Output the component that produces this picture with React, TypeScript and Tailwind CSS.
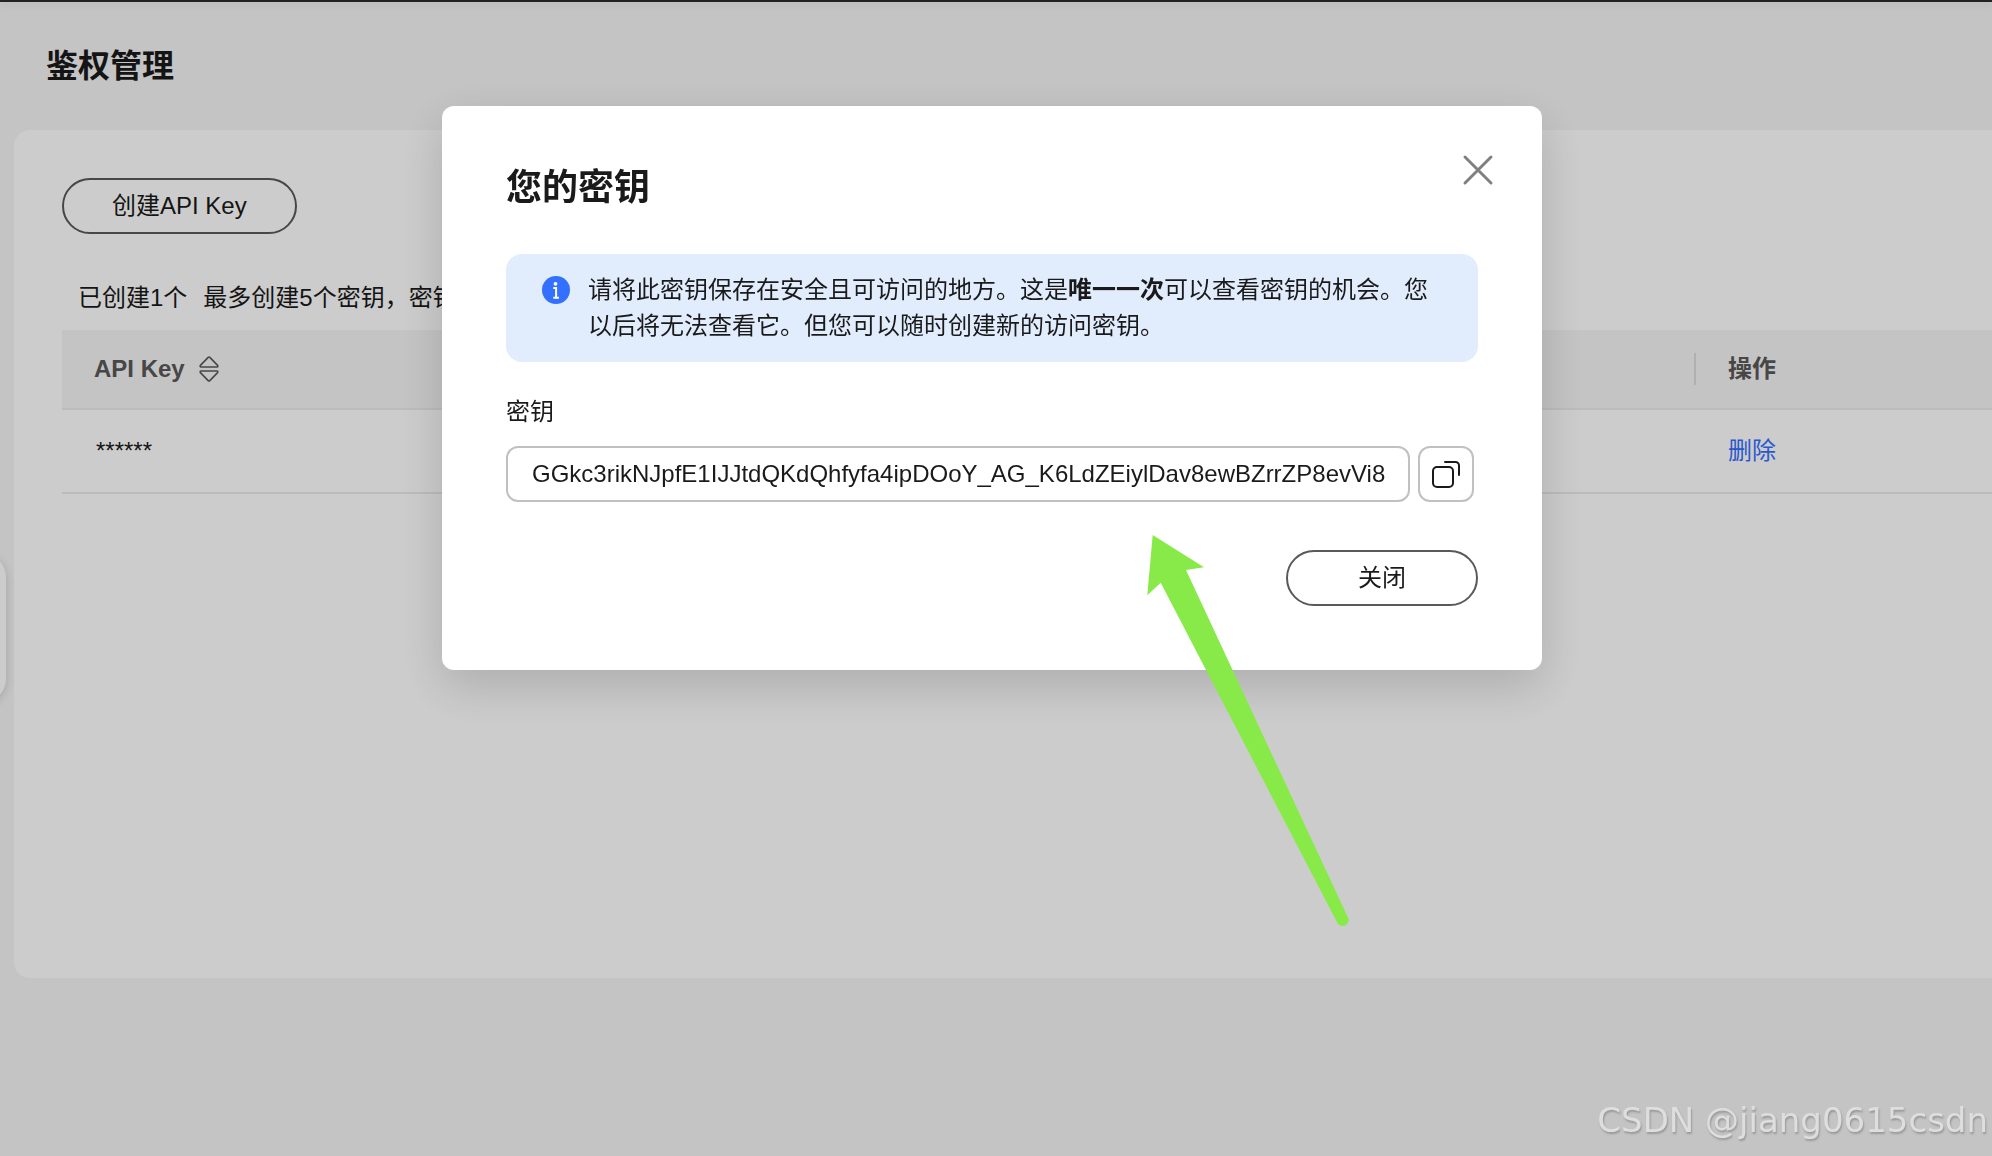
import { useState } from "react";

const SECRET = "GGkc3rikNJpfE1IJJtdQKdQhfyfa4ipDOoY_AG_K6LdZEiylDav8ewBZrrZP8evVi8";

function SortIcon() {
  return (
    <svg
      width="20"
      height="26"
      viewBox="0 0 20 26"
      fill="none"
      stroke="currentColor"
      strokeWidth="1.6"
      strokeLinejoin="round"
    >
      <path d="M10.8 1.4 18.6 9.4c.5.6.3 1.6-.6 1.6H2c-.9 0-1.1-1-.6-1.6L9.2 1.4c.5-.5 1.1-.5 1.6 0Z" />
      <path d="M10.8 24.6 18.6 16.6c.5-.6.3-1.6-.6-1.6H2c-.9 0-1.1 1-.6 1.6l7.8 8c.5.5 1.1.5 1.6 0Z" />
    </svg>
  );
}

function InfoIcon() {
  return (
    <svg width="28" height="28" viewBox="0 0 28 28" className="mt-1 shrink-0">
      <circle cx="14" cy="14" r="14" fill="#3370ff" />
      <circle cx="13.5" cy="7.8" r="1.9" fill="#fff" />
      <path
        d="M11.3 12h2.8V21.8M11.3 21.8h5.6"
        fill="none"
        stroke="#fff"
        strokeWidth="2"
      />
    </svg>
  );
}

function CopyIcon() {
  return (
    <svg
      width="28"
      height="28"
      viewBox="0 0 28 28"
      fill="none"
      stroke="#1a1a1a"
      strokeWidth="2"
      strokeLinecap="round"
    >
      <rect x="1" y="7" width="20" height="20" rx="4" />
      <path d="M13 2h10.5A3.5 3.5 0 0 1 27 5.5V15" />
    </svg>
  );
}

function Arrow() {
  return (
    <svg
      width="208"
      height="398"
      viewBox="0 0 208 398"
      fill="#88ea48"
      className="pointer-events-none absolute top-[426px] left-[702px]"
    >
      <path d="M8.7 3 60 35.3 42 38 203.5 384.5a5.8 5.8 0 0 1-9.8 7L16.7 50.7 3.3 63.3Z" />
    </svg>
  );
}

function KeyDialog({ onClose }: { onClose: () => void }) {
  return (
    <div className="fixed inset-0 flex items-start justify-center bg-black/20 pt-[106px] pr-2">
      <div
        role="dialog"
        aria-labelledby="dialog-title"
        className="relative w-[1100px] rounded-xl bg-white p-16 shadow-[0_16px_48px_rgba(0,0,0,0.16)]"
      >
        <button
          type="button"
          aria-label="关闭"
          onClick={onClose}
          className="absolute top-12 right-12 flex size-8 items-center justify-center text-[#808080]"
        >
          <svg width="32" height="32" viewBox="0 0 32 32" stroke="currentColor" strokeWidth="3" strokeLinecap="round">
            <path d="M3 3 29 29M29 3 3 29" />
          </svg>
        </button>

        <h2 id="dialog-title" className="mb-12 text-4xl leading-9 font-bold">
          您的密钥
        </h2>

        <div className="flex gap-[18px] rounded-2xl bg-[#e1ecfd] px-9 py-[18px]">
          <InfoIcon />
          <p className="leading-9">
            请将此密钥保存在安全且可访问的地方。这是<strong>唯一一次</strong>
            可以查看密钥的机会。您以后将无法查看它。但您可以随时创建新的访问密钥。
          </p>
        </div>

        <label htmlFor="secret" className="mt-8 mb-4 block leading-9">
          密钥
        </label>
        <div className="flex gap-2 pr-1">
          <input
            id="secret"
            readOnly
            value={SECRET}
            className="h-14 min-w-0 flex-1 rounded-xl border-2 border-[#c0c0c0] bg-white pr-4 pl-6 outline-none"
          />
          <button
            type="button"
            aria-label="复制"
            className="flex size-14 items-center justify-center rounded-xl border-2 border-[#c0c0c0]"
          >
            <CopyIcon />
          </button>
        </div>

        <div className="mt-12 flex justify-end">
          <button
            type="button"
            onClick={onClose}
            className="h-14 w-48 rounded-full border-2 border-[#595959]"
          >
            关闭
          </button>
        </div>

        <Arrow />
      </div>
    </div>
  );
}

export default function App() {
  const [open, setOpen] = useState(true);

  return (
    <div className="relative min-h-screen overflow-hidden bg-[#f5f5f5] font-['Liberation_Sans','Noto_Sans_CJK_SC',sans-serif] text-2xl text-[#1a1a1a]">
      <header className="h-[2px] bg-[#2b2b2b] shadow-[0_2px_8px_rgba(0,0,0,0.12)]" />

      <div className="flex h-32 items-center px-[46px]">
        <h1 className="text-[32px] leading-9 font-bold">鉴权管理</h1>
      </div>

      {/* handle of the collapsed side menu */}
      <div className="absolute top-[554px] -left-10 h-[148px] w-[46px] rounded-3xl bg-white shadow-[0_2px_10px_rgba(0,0,0,0.16)]" />

      <main className="ml-[14px] min-h-[848px] rounded-l-2xl bg-white pt-12 pl-12">
        <button
          type="button"
          onClick={() => setOpen(true)}
          className="h-14 rounded-full border-2 border-[#595959] px-12"
        >
          创建API Key
        </button>

        <div className="mt-[46px] mb-[14px] flex gap-4 pl-4 leading-9">
          <span>已创建1个</span>
          <span>最多创建5个密钥，密钥</span>
        </div>

        <table className="w-full border-separate border-spacing-0 text-left">
          <thead>
            <tr className="h-20 bg-[#f5f5f5] text-[#595959]">
              <th className="border-b-2 border-[#ebebeb] pl-8">
                <div className="flex items-center gap-[14px]">
                  API Key
                  <SortIcon />
                </div>
              </th>
              <th className="w-[298px] border-b-2 border-[#ebebeb]">
                <div className="h-8 border-l-2 border-[#dcdcdc] pl-8 leading-8">操作</div>
              </th>
            </tr>
          </thead>
          <tbody>
            <tr className="h-[84px]">
              <td className="border-b-2 border-[#ebebeb] pl-[34px]">******</td>
              <td className="border-b-2 border-[#ebebeb] pl-[34px]">
                <a href="#" className="text-[#3370ff]">
                  删除
                </a>
              </td>
            </tr>
          </tbody>
        </table>
      </main>

      {open && <KeyDialog onClose={() => setOpen(false)} />}

      <div className="pointer-events-none fixed right-1 bottom-3 font-['DejaVu_Sans',sans-serif] text-[34px] leading-[48px] text-[#dedede] [text-shadow:1px_2px_2px_#999999]">
        CSDN @jiang0615csdn
      </div>
    </div>
  );
}
